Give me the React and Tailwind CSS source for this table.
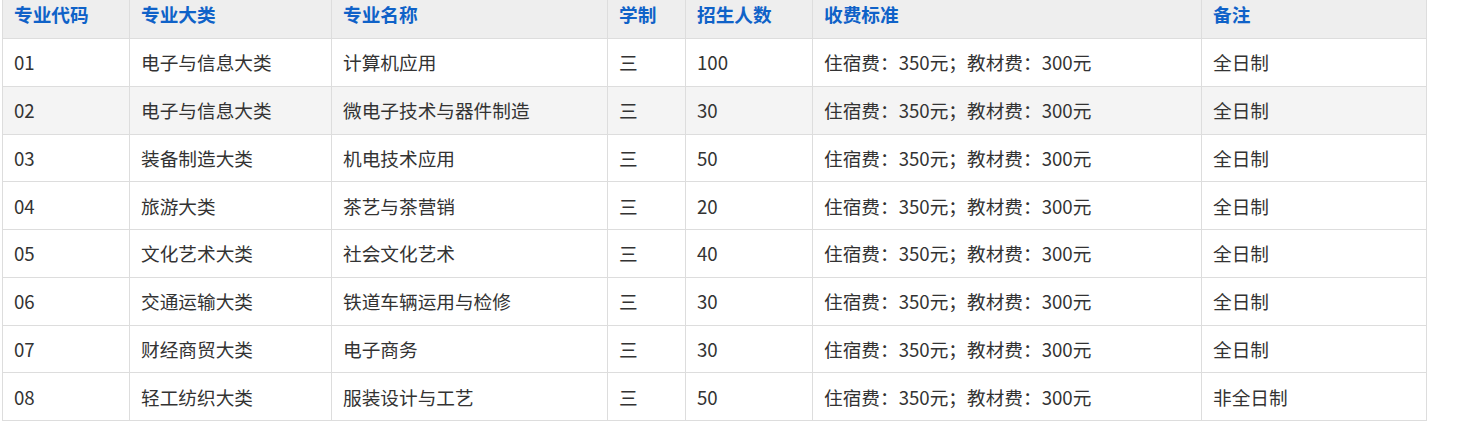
import React from "react";

const rows = [
  ["01", "电子与信息大类", "计算机应用", "三", "100", "住宿费：350元；教材费：300元", "全日制"],
  ["02", "电子与信息大类", "微电子技术与器件制造", "三", "30", "住宿费：350元；教材费：300元", "全日制"],
  ["03", "装备制造大类", "机电技术应用", "三", "50", "住宿费：350元；教材费：300元", "全日制"],
  ["04", "旅游大类", "茶艺与茶营销", "三", "20", "住宿费：350元；教材费：300元", "全日制"],
  ["05", "文化艺术大类", "社会文化艺术", "三", "40", "住宿费：350元；教材费：300元", "全日制"],
  ["06", "交通运输大类", "铁道车辆运用与检修", "三", "30", "住宿费：350元；教材费：300元", "全日制"],
  ["07", "财经商贸大类", "电子商务", "三", "30", "住宿费：350元；教材费：300元", "全日制"],
  ["08", "轻工纺织大类", "服装设计与工艺", "三", "50", "住宿费：350元；教材费：300元", "非全日制"],
];

const heads = ["专业代码", "专业大类", "专业名称", "学制", "招生人数", "收费标准", "备注"];
const widths = ["w-[127px]", "w-[202px]", "w-[276px]", "w-[78px]", "w-[127px]", "w-[389px]", "w-[225px]"];

export default function App() {
  return (
    <div
      className="bg-white w-[1466px] h-[438px] overflow-hidden"
      style={{ fontFamily: '"Noto Sans CJK SC", "Noto Sans", sans-serif' }}
    >
      <table className="ml-[2px] -mt-[10px] border-collapse table-fixed w-[1425px] text-[18.67px] text-[#333]">
        <colgroup>
          {widths.map((w, i) => (
            <col key={i} className={w} />
          ))}
        </colgroup>
        <thead>
          <tr className="bg-[#eeeeee] h-[48px]">
            {heads.map((h, i) => (
              <th
                key={i}
                className="border border-[#dddddd] text-left font-bold text-[#0f62c8] pl-[11px] pr-2 pt-0 pb-[2px] leading-[24px]"
              >
                {h}
              </th>
            ))}
          </tr>
        </thead>
        <tbody>
          {rows.map((r, ri) => (
            <tr key={ri} className={ri === 1 ? "bg-[#f4f4f4] h-[47.75px]" : "bg-white h-[47.75px]"}>
              {r.map((c, ci) => (
                <td
                  key={ci}
                  className="border border-[#dddddd] pl-[11px] pr-2 py-0 leading-[24px] whitespace-nowrap"
                >
                  {c}
                </td>
              ))}
            </tr>
          ))}
        </tbody>
      </table>
    </div>
  );
}
